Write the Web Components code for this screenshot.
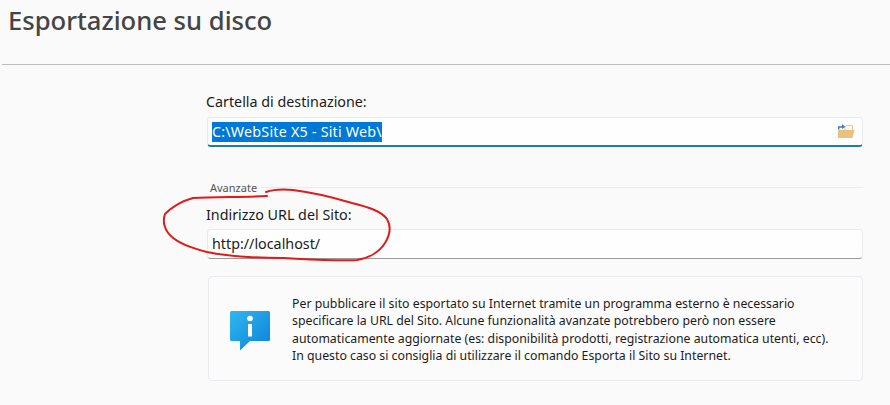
<!DOCTYPE html>
<html lang="it">
<head>
<meta charset="utf-8">
<title>Esportazione su disco</title>
<style>
  html, body { margin: 0; height: 100%; background: #fafafa; }
  body { width: 890px; height: 405px; overflow: hidden; position: relative; font-family: "Noto Sans", "Open Sans", sans-serif; }
</style>
</head>
<body>
<export-page>
  <page-header slot="header">Esportazione su disco</page-header>
  <field-box label="Cartella di destinazione:" value="C:\WebSite X5 - Siti Web\" selected browse></field-box>
  <group-line>Avanzate</group-line>
  <field-box label="Indirizzo URL del Sito:" value="http://localhost/"></field-box>
  <info-box>Per pubblicare il sito esportato su Internet tramite un programma esterno è necessario<br>specificare la URL del Sito. Alcune funzionalità avanzate potrebbero però non essere<br>automaticamente aggiornate (es: disponibilità prodotti, registrazione automatica utenti, ecc).<br>In questo caso si consiglia di utilizzare il comando Esporta il Sito su Internet.</info-box>
</export-page>
<red-scribble></red-scribble>

<script>
class ExportPage extends HTMLElement {
  constructor() {
    super();
    this.attachShadow({ mode: "open" });
    this.shadowRoot.innerHTML = `
      <style>
        :host { display: block; }
        .content {
          display: flex;
          flex-direction: column;
          margin-left: 206px;
          width: 657px;
        }
      </style>
      <slot name="header"></slot>
      <div class="content"><slot></slot></div>
    `;
  }
}

class PageHeader extends HTMLElement {
  constructor() {
    super();
    this.attachShadow({ mode: "open" });
    this.shadowRoot.innerHTML = `
      <style>
        :host {
          display: block;
          box-sizing: border-box;
          height: 65px;
          margin-left: 2px;
          padding: 3px 0 0 6px;
          border-bottom: 1px solid #bdbdbd;
          color: #444444;
          font-size: 25.6px;
          line-height: 35px;
          font-weight: 500;
        }
      </style>
      <slot></slot>
    `;
  }
}

class FieldBox extends HTMLElement {
  constructor() {
    super();
    this.attachShadow({ mode: "open" });
    const selected = this.hasAttribute("selected");
    const browse = this.hasAttribute("browse");
    this.shadowRoot.innerHTML = `
      <style>
        :host {
          display: block;
          color: #1b1b1b;
          font-size: 14.3px;
        }
        .label { height: 22px; line-height: 20px; margin-top: ${browse ? 27 : 7}px; margin-bottom: ${browse ? 3 : 2}px; }
        .box {
          box-sizing: border-box;
          display: flex;
          align-items: center;
          justify-content: space-between;
          height: 30px;
          margin-left: 1px;
          padding: 0 7px 0 4px;
          background: #fefefe;
          border: 1px solid #e8ebee;
          border-bottom: ${selected ? "2px solid #1a7fa8" : "1px solid #9a9a9a"};
          border-radius: 4px;
        }
        .value { line-height: 20px; }
        .selected { background: #0078d7; color: #ffffff; letter-spacing: 0.22px; }
        svg { display: block; }
      </style>
      <div class="label">${this.getAttribute("label")}</div>
      <div class="box">
        <span class="value ${selected ? "selected" : ""}">${this.getAttribute("value")}</span>
        ${browse ? `
        <svg width="17" height="15" viewBox="0 0 17 15">
          <path d="M7 3.500L8.500 1.500H14.500V6.500H7z" fill="#fdf8ee" stroke="#e9c88a" stroke-width="1"/>
          <path d="M0 6H16.500L14.500 14H0z" fill="#e8c27f"/>
          <path d="M.7 5.500V3H4.500" fill="none" stroke="#3f7fbf" stroke-width="1.500"/>
          <path d="M4 .3L7.500 2.700L4 5z" fill="#3f7fbf"/>
        </svg>` : ""}
      </div>
    `;
  }
}

class GroupLine extends HTMLElement {
  constructor() {
    super();
    this.attachShadow({ mode: "open" });
    this.shadowRoot.innerHTML = `
      <style>
        :host {
          display: flex;
          align-items: center;
          gap: 4px;
          height: 14px;
          margin: 33px 0 4px 4px;
          color: #555555;
          font-size: 11px;
        }
        .rule { flex: 1; height: 1px; background: #ebebeb; }
      </style>
      <slot></slot>
      <div class="rule"></div>
    `;
  }
}

class InfoBox extends HTMLElement {
  constructor() {
    super();
    this.attachShadow({ mode: "open" });
    this.shadowRoot.innerHTML = `
      <style>
        :host {
          box-sizing: border-box;
          display: flex;
          align-items: center;
          height: 105px;
          margin: 17px 0 0 2px;
          padding: 0 0 0 21px;
          background: #fbfbfb;
          border: 1px solid #e9ebee;
          border-radius: 4px;
          color: #1b1b1b;
          font-size: 12.3px;
          line-height: 17.4px;
          white-space: nowrap;
        }
        svg { flex: none; margin: 4px 22px 0 0; display: block; }
        .text { padding-top: 2px; }
      </style>
      <svg width="40" height="40" viewBox="0 0 40 40">
        <defs>
          <linearGradient id="g" x1="0" y1="0" x2="1" y2="1">
            <stop offset="0" stop-color="#2fb8f0"/>
            <stop offset="1" stop-color="#0e80d8"/>
          </linearGradient>
        </defs>
        <path d="M1.500 0h37A1.500 1.500 0 0 1 40 1.500v27a1.500 1.500 0 0 1-1.500 1.500H20L10 39.500V30H1.500A1.500 1.500 0 0 1 0 28.500v-27A1.500 1.500 0 0 1 1.500 0z" fill="url(#g)"/>
        <circle cx="20" cy="7.500" r="2.800" fill="#fff"/>
        <rect x="18" y="13" width="4" height="12.500" fill="#fff"/>
      </svg>
      <div class="text"><slot></slot></div>
    `;
  }
}

class RedScribble extends HTMLElement {
  constructor() {
    super();
    this.attachShadow({ mode: "open" });
    this.shadowRoot.innerHTML = `
      <style>
        :host { position: absolute; left: 0; top: 0; width: 890px; height: 405px; pointer-events: none; }
      </style>
      <svg width="890" height="405" viewBox="0 0 890 405">
        <path d="M267 196 C245 197 215 197 193 198 C182 201 172 207 165 214 C162 222 165 231 172 237 C181 245 195 249 207 252 C232 257 258 258 283 258 C305 259 335 261 357 260 C370 258 380 251 385 243 C390 235 391 226 387 219 C381 211 368 207 352 203 C335 198 310 192 293 190 C282 189 272 190 266 192" fill="none" stroke="#e01b1b" stroke-width="2" stroke-linecap="round"/>
      </svg>
    `;
  }
}

customElements.define("export-page", ExportPage);
customElements.define("page-header", PageHeader);
customElements.define("field-box", FieldBox);
customElements.define("group-line", GroupLine);
customElements.define("info-box", InfoBox);
customElements.define("red-scribble", RedScribble);
</script>
</body>
</html>
